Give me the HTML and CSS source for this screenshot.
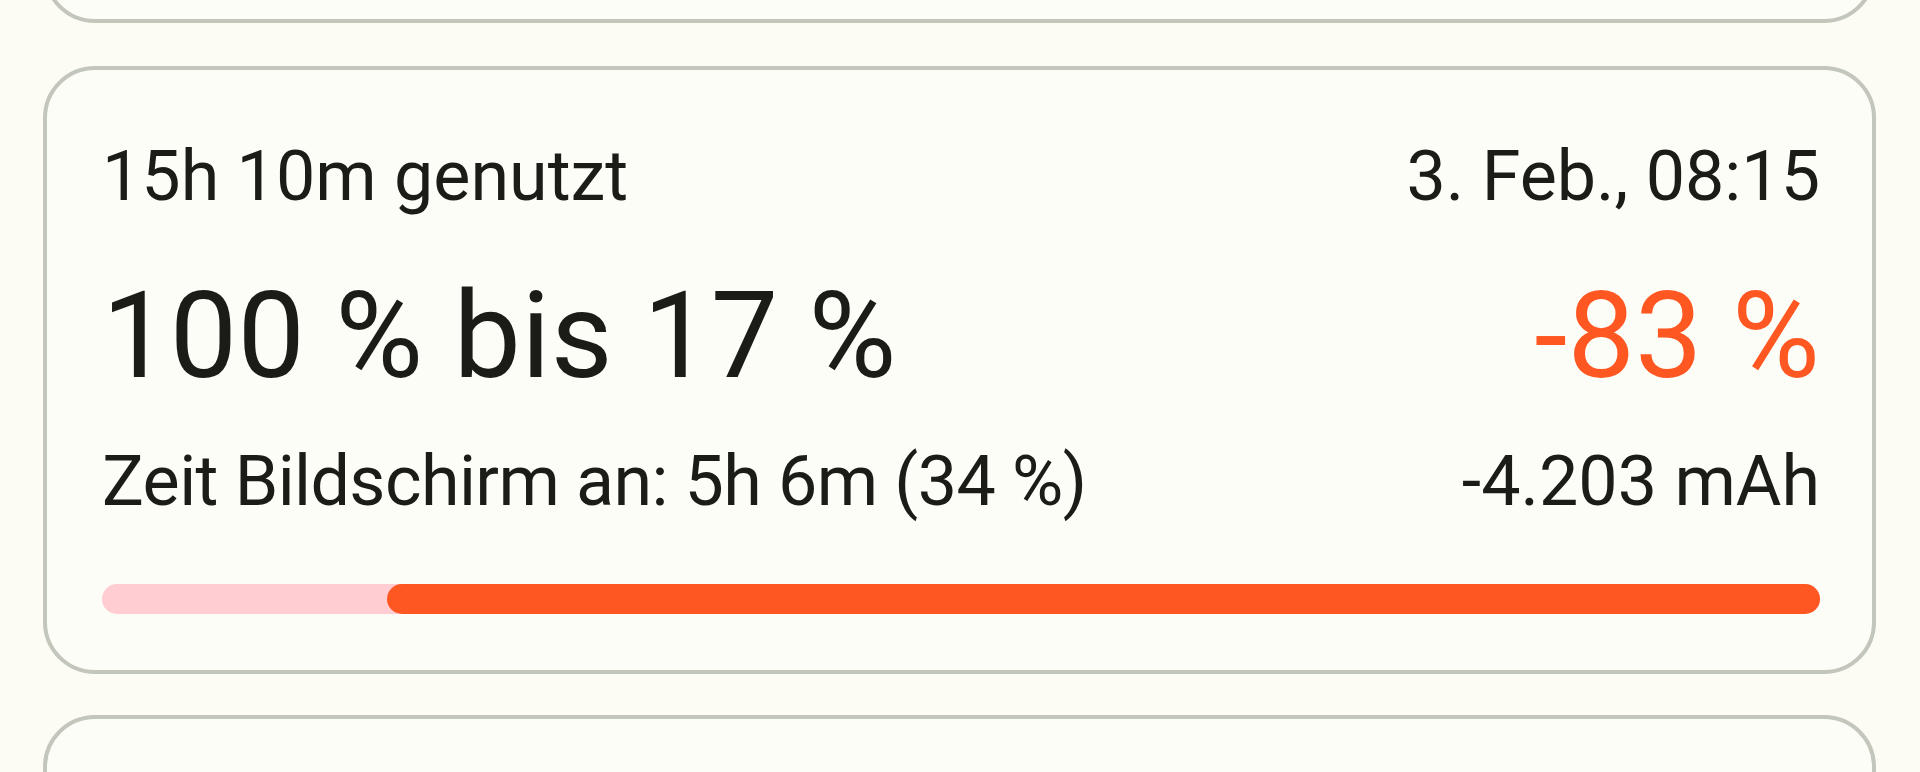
FILE: index.html
```html
<!DOCTYPE html>
<html lang="de">
    <head>
        <meta charset="UTF-8" />
        <title>Akkuverlauf</title>
        <link rel="stylesheet" href="styles.css">
    </head>
    <body>
        <div class="list">
            <!-- vorherige Karte (nach oben gescrollt) -->
            <div class="card card-prev"></div>

            <div class="card card-main">
                <div class="row">
                    <span>15h 10m genutzt</span>
                    <span>3. Feb., 08:15</span>
                </div>
                <div class="row row-main">
                    <span class="range">100 % bis 17 %</span>
                    <span class="drain">-83 %</span>
                </div>
                <div class="row row-sub">
                    <span class="screen">Zeit Bildschirm an: 5h 6m (34 %)</span>
                    <span>-4.203 mAh</span>
                </div>
                <!-- Verbrauchsbalken -->
                <div class="bar">
                    <div class="bar-fill" style="width: 83.4%"></div>
                </div>
            </div>

            <!-- nächste Karte -->
            <div class="card card-next"></div>
        </div>
    </body>
</html>
```

FILE: styles.css
```css
html,
body {
    margin: 0;
    height: 100%;
    overflow: hidden;
    background-color: #fcfcf5;
}

body {
    font-family: Roboto, "Noto Sans", sans-serif;
    color: #1b1c18;
}

/* Kartenliste */
.list {
    display: flex;
    flex-direction: column;
    padding: 0 44px 0 43px;
}

.card {
    border: 4px solid #c3c6bb;
    border-radius: 52px;
    background-color: #fdfdf7;
}

/* halb weggescrollte Karten */
.card-prev {
    height: 200px;
    margin-top: -177px;
    box-sizing: border-box;
}
.card-next {
    height: 300px;
    margin-top: 41px;
}

.card-main {
    margin-top: 43px;
    padding: 65px 52px 56px 55px;
}

.row {
    display: flex;
    justify-content: space-between;
    font-size: 70px;
    line-height: 82px;
    white-space: nowrap;
}

.row-main {
    margin-top: 49px;
    font-size: 120px;
    line-height: 140px;
}

.range {
    letter-spacing: 0.3px;
}

.row-sub {
    margin-top: 34px;
}

.screen {
    letter-spacing: -0.6px;
}

.drain {
    color: #ff5722;
}

/* Balken: rosa Spur, orange Verbrauch von rechts */
.bar {
    display: flex;
    justify-content: flex-end;
    margin-top: 62px;
    height: 30px;
    border-radius: 15px;
    background-color: #ffcdd2;
}
.bar-fill {
    height: 100%;
    border-radius: 15px;
    background-color: #ff5722;
}
```
